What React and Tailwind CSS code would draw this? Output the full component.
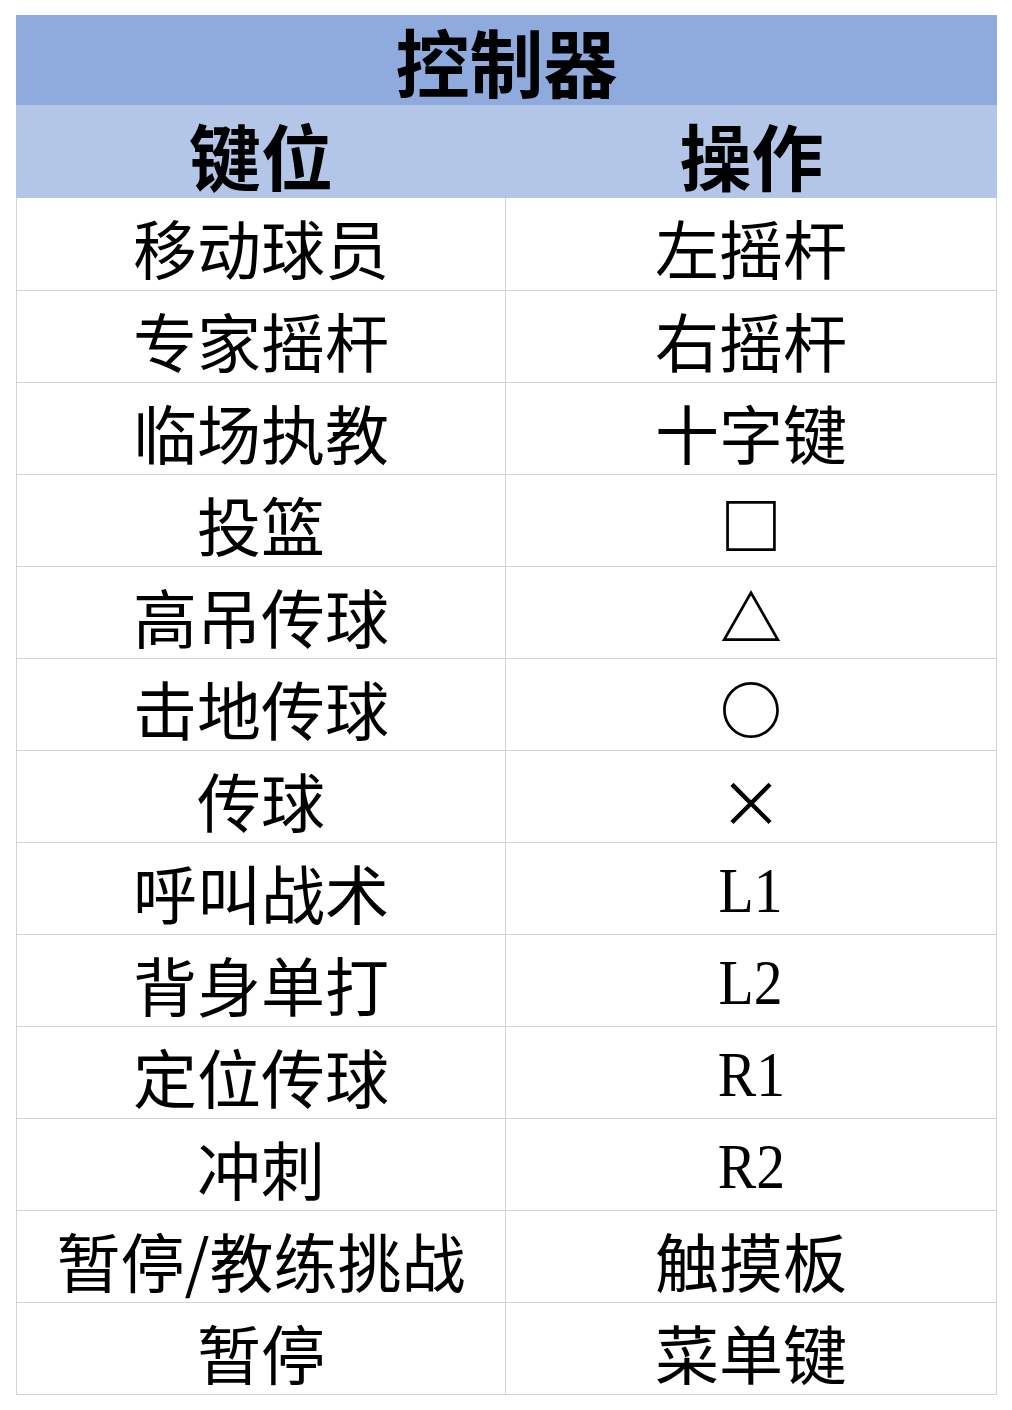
const rows = [
  ["移动球员", "左摇杆"],
  ["专家摇杆", "右摇杆"],
  ["临场执教", "十字键"],
  ["投篮", "□"],
  ["高吊传球", "△"],
  ["击地传球", "○"],
  ["传球", "×"],
  ["呼叫战术", "L1"],
  ["背身单打", "L2"],
  ["定位传球", "R1"],
  ["冲刺", "R2"],
  ["暂停/教练挑战", "触摸板"],
  ["暂停", "菜单键"],
];

const cjk = { fontFamily: '"Noto Sans CJK SC", "Noto Sans", sans-serif' };
const latin = { fontFamily: '"Liberation Serif", "Noto Sans CJK SC", serif' };
const symbols = ["□", "△", "○"];

export default function App() {
  return (
    <div className="w-[1012px] h-[1410px] bg-white pt-[15px] pl-[16px]">
      <div className="w-[981px]" style={cjk}>
        {/* Title */}
        <div className="h-[90px] bg-[#8faadc] flex items-center justify-center text-[74px] font-bold text-black leading-none">
          控制器
        </div>
        {/* Column headers */}
        <div className="h-[93px] bg-[#b4c6e7] grid grid-cols-[490px_491px] text-[72px] font-bold text-black leading-none">
          <div className="flex items-center justify-center pt-[4px]">键位</div>
          <div className="flex items-center justify-center pt-[4px]">操作</div>
        </div>
        {/* Data rows */}
        <div className="border-l border-r border-b border-[#d3d3d3]">
          {rows.map(([key, action], i) => {
            const isLatin = /^[LR][12]$/.test(action);
            const isSymbol = symbols.includes(action);
            return (
              <div
                key={i}
                className={`h-[92px] grid grid-cols-[489px_490px] ${i > 0 ? "border-t border-[#d3d3d3]" : ""}`}
              >
                <div className="flex items-center justify-center border-r border-[#d3d3d3] text-[64px] leading-none text-black pt-[4px]">
                  {key}
                </div>
                <div className="flex items-center justify-center text-[64px] leading-none text-black pt-[4px]">
                  {isLatin ? (
                    <span className="inline-block scale-x-90" style={latin}>
                      {action}
                    </span>
                  ) : isSymbol ? (
                    <span className="font-bold text-[62px]">{action}</span>
                  ) : (
                    action
                  )}
                </div>
              </div>
            );
          })}
        </div>
      </div>
    </div>
  );
}
